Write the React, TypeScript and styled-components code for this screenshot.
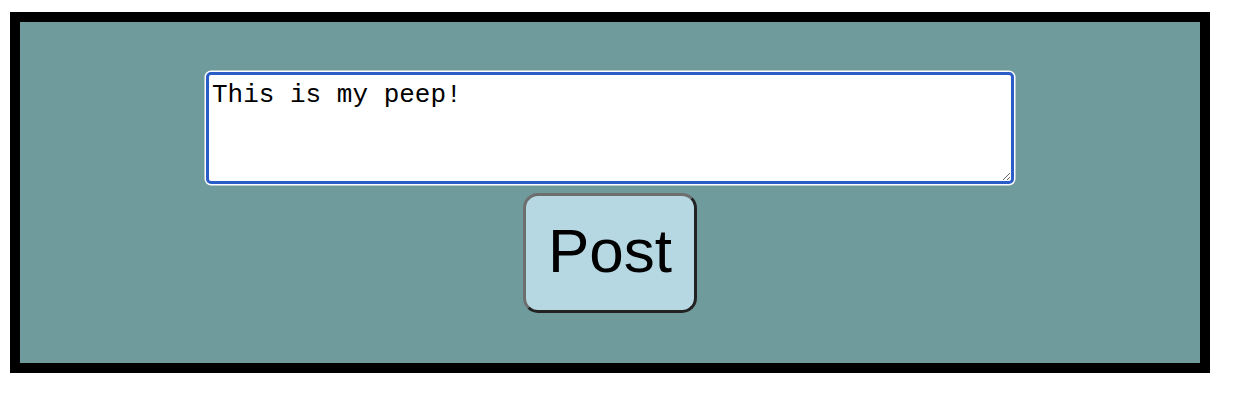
import React from "react";
import styled, { createGlobalStyle } from "styled-components";

const Global = createGlobalStyle`
  html, body { margin: 0; padding: 0; background: #ffffff; }
  body { font-family: "Liberation Sans", Arial, sans-serif; }
`;

const Panel = styled.div`
  box-sizing: border-box;
  width: 1200px;
  height: 361px;
  margin: 12px 10px 0;
  border: 10px solid #000000;
  background: #6f9b9d;
  padding-top: 49px;
  display: flex;
  flex-direction: column;
  align-items: center;
  gap: 8px;
`;

const PeepInput = styled.textarea`
  box-sizing: border-box;
  width: 808px;
  height: 112px;
  margin: 1px 0 0;
  padding: 6px 3px 2px;
  border: 3px solid #2b5dc9;
  border-radius: 5px;
  box-shadow: 0 0 0 1.5px #ffffff;
  outline: none;
  background: #ffffff;
  color: #000000;
  font-family: "Liberation Mono", "Courier New", monospace;
  font-size: 26px;
  line-height: 1.15;
  resize: both;
`;

const PostButton = styled.button`
  box-sizing: border-box;
  width: 174px;
  height: 120px;
  margin-top: 1px;
  border: 3px solid;
  border-color: #6e6e6e #222222 #222222 #6e6e6e;
  border-radius: 15px;
  background: #b5d8e3;
  color: #000000;
  font-family: "Liberation Sans", Arial, sans-serif;
  font-size: 62px;
  padding: 0 0 5px;
  cursor: pointer;
`;

export default function App() {
  return (
    <>
      <Global />
      <Panel>
        <PeepInput defaultValue="This is my peep!" />
        <PostButton>Post</PostButton>
      </Panel>
    </>
  );
}
